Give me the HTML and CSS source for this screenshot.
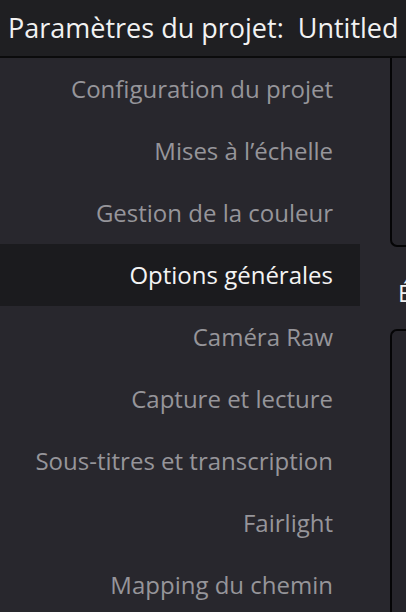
FILE: index.html
```html
<!DOCTYPE html>
<html lang="fr">
<head>
  <meta charset="UTF-8">
  <title>Paramètres du projet</title>
  <link rel="stylesheet" href="styles.css">
</head>
<body>
  <div class="window">
    <div class="titlebar">Paramètres du projet:&nbsp; Untitled</div>

    <div class="content">
      <div class="sidebar">
        <div class="item">Configuration du projet</div>
        <div class="item">Mises à l’échelle</div>
        <div class="item">Gestion de la couleur</div>
        <div class="item active">Options générales</div>
        <div class="item">Caméra Raw</div>
        <div class="item">Capture et lecture</div>
        <div class="item">Sous-titres et transcription</div>
        <div class="item">Fairlight</div>
        <div class="item">Mapping du chemin</div>
      </div>

      <div class="panels">
        <div class="panel top"></div>
        <div class="section-label">É</div>
        <div class="panel bottom"></div>
      </div>
    </div>
  </div>
</body>
</html>
```

FILE: styles.css
```css
* {
  box-sizing: border-box;
}

body {
  margin: 0;
  background-color: #28272d;
  font-family: 'Open Sans', sans-serif;
  overflow: hidden;
}

.window {
  display: flex;
  flex-direction: column;
  height: 612px;
}

.titlebar {
  height: 58px;
  flex-shrink: 0;
  padding-left: 8px;
  padding-bottom: 1px;
  display: flex;
  align-items: center;
  background-color: #1f1f22;
  border-bottom: 2px solid #0b0b0c;
  color: #f2f2f2;
  font-size: 27px;
  white-space: nowrap;
}

.content {
  display: flex;
  flex: 1;
}

.sidebar {
  width: 360px;
  flex-shrink: 0;
}

.item {
  height: 62px;
  padding-right: 27px;
  padding-bottom: 1px;
  display: flex;
  align-items: center;
  justify-content: flex-end;
  color: #96959a;
  font-size: 24px;
  white-space: nowrap;
}

.item.active {
  background-color: #1b1b1e;
  color: #f4f4f4;
}

.panels {
  flex: 1;
  display: flex;
  flex-direction: column;
  padding-left: 30px;
}

.panel {
  border: 2px solid #050506;
  border-right: none;
  background-color: #26252b;
}

.panel.top {
  height: 189px;
  border-top: none;
  border-radius: 0 0 0 7px;
}

.section-label {
  height: 82px;
  padding: 34px 0 0 8px;
  color: #f0f0f0;
  font-size: 24px;
  line-height: 1;
}

.panel.bottom {
  flex: 1;
  border-bottom: none;
  border-radius: 7px 0 0 0;
}
```
